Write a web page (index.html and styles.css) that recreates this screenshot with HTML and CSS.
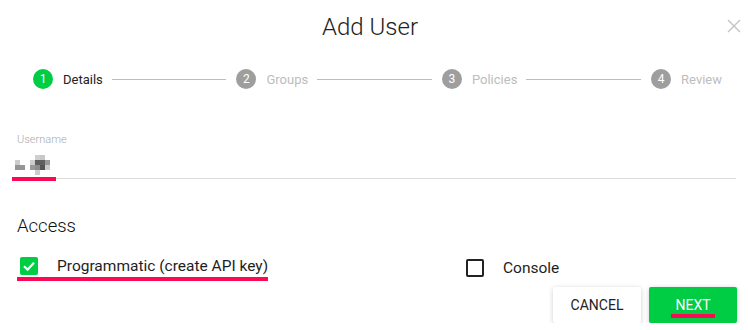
FILE: index.html
```html
<!DOCTYPE html>
<html lang="en">
<head>
    <meta charset="UTF-8">
    <meta name="viewport" content="width=device-width, initial-scale=1.0">
    <title>Add User</title>
    <link rel="stylesheet" href="styles.css">
</head>
<body>

<div class="dialog">
    <!-- Header -->
    <div class="dialog-header">
        <span></span>
        <h1>Add User</h1>
        <button class="close-btn" aria-label="Close">
            <svg width="14" height="14" viewBox="0 0 14 14">
                <path d="M1 1 L13 13 M13 1 L1 13" stroke="#c4c4c4" stroke-width="1.4" fill="none"/>
            </svg>
        </button>
    </div>

    <!-- Stepper -->
    <div class="stepper">
        <div class="step active"><span class="step-num">1</span><span class="step-label">Details</span></div>
        <div class="step-line"></div>
        <div class="step"><span class="step-num">2</span><span class="step-label">Groups</span></div>
        <div class="step-line"></div>
        <div class="step"><span class="step-num">3</span><span class="step-label">Policies</span></div>
        <div class="step-line"></div>
        <div class="step"><span class="step-num">4</span><span class="step-label">Review</span></div>
    </div>

    <!-- Username -->
    <div class="field">
        <label class="field-label">Username</label>
        <div class="field-value">
            <svg class="blurred" width="40" height="20" viewBox="15 155 40 20">
                <rect x="35" y="155" width="5" height="5" fill="#cfcfcf"/>
                <rect x="40" y="155" width="5" height="5" fill="#c8c8c8"/>
                <rect x="15" y="160" width="5" height="5" fill="#cccccc"/>
                <rect x="30" y="160" width="5" height="5" fill="#cdcdcd"/>
                <rect x="35" y="160" width="5" height="5" fill="#5e5e5e"/>
                <rect x="40" y="160" width="5" height="5" fill="#606060"/>
                <rect x="45" y="160" width="5" height="5" fill="#9a9a9a"/>
                <rect x="15" y="165" width="5" height="5" fill="#959595"/>
                <rect x="20" y="165" width="5" height="5" fill="#959595"/>
                <rect x="30" y="165" width="5" height="5" fill="#999999"/>
                <rect x="35" y="165" width="5" height="5" fill="#8c8c8c"/>
                <rect x="40" y="165" width="5" height="5" fill="#555555"/>
                <rect x="45" y="165" width="5" height="5" fill="#cccccc"/>
                <rect x="35" y="170" width="5" height="5" fill="#cccccc"/>
            </svg>
        </div>
        <span class="mark mark-field"></span>
    </div>

    <!-- Access -->
    <h2 class="section-title">Access</h2>
    <div class="options">
        <label class="option marked">
            <span class="checkbox checked">
                <svg width="18" height="18" viewBox="0 0 18 18">
                    <path d="M4 9.2 L7.6 12.6 L14 5.8" stroke="#fff" stroke-width="2.2" fill="none"/>
                </svg>
            </span>
            <span class="option-text">Programmatic (create API key)</span>
        </label>
        <label class="option">
            <span class="checkbox"></span>
            <span class="option-text">Console</span>
        </label>
    </div>

    <!-- Actions -->
    <div class="actions">
        <button class="btn btn-cancel">Cancel</button>
        <button class="btn btn-next"><span class="btn-text">Next</span></button>
    </div>
</div>

</body>
</html>
```

FILE: styles.css
```css
/* General Styles */
body {
    margin: 0;
    font-family: Roboto, "Liberation Sans", sans-serif;
    background-color: #ffffff;
    color: #222;
}

.dialog {
    width: 724px;
    padding: 0 12px;
}

/* Header */
.dialog-header {
    display: grid;
    grid-template-columns: 1fr auto 1fr;
    align-items: center;
    height: 54px;
}

.dialog-header h1 {
    margin: 0 8px 0 0;
    font-family: "Roboto Light", Roboto, sans-serif;
    font-size: 24px;
    font-weight: 300;
    color: #222;
}

.close-btn {
    justify-self: end;
    margin-right: -5px;
    padding: 0;
    border: none;
    background: none;
    display: flex;
    margin-top: -2px;
}

/* Stepper */
.stepper {
    display: flex;
    align-items: center;
    margin-top: 15px;
    padding: 0 14px 0 21px;
}

.step {
    display: flex;
    align-items: center;
    gap: 10px;
}

.step-num {
    width: 20px;
    height: 20px;
    border-radius: 50%;
    background-color: #9e9e9e;
    color: #fff;
    font-size: 12px;
    display: flex;
    align-items: center;
    justify-content: center;
}

.step-label {
    font-size: 13px;
    color: #bdbdbd;
}

.step.active .step-num {
    background-color: #00cc44;
}

.step.active .step-label {
    color: #222;
}

.step-line {
    flex: 1;
    height: 1px;
    background-color: #bdbdbd;
    margin: 0 10px 0 9px;
}

/* Username field */
.field {
    position: relative;
    margin-top: 44px;
    border-bottom: 1px solid #dedede;
}

.field-label {
    display: block;
    padding-left: 5px;
    font-size: 11px;
    line-height: 14px;
    color: #aaa;
    font-weight: 300;
}

.field-value {
    margin-top: 8px;
    height: 20px;
    padding: 0 0 3px 3px;
}

.blurred {
    display: block;
}

.mark {
    position: absolute;
    background-color: #fa0a55;
    height: 4px;
}

.mark-field {
    left: 0;
    width: 44px;
    bottom: -3px;
}

/* Access */
.section-title {
    margin: 35px 0 0 5px;
    font-size: 18.5px;
    font-weight: 300;
    line-height: 24px;
    color: #111;
}

.options {
    display: grid;
    grid-template-columns: 446px 1fr;
    margin-top: 19px;
    padding-left: 5px;
}

.option {
    display: inline-flex;
    align-items: center;
    gap: 19px;
    justify-self: start;
    padding: 0 0 2px 3px;
    font-size: 15.5px;
    color: #1e1e1e;
}

.option.marked {
    border-bottom: 4px solid #fa0a55;
}

.checkbox {
    width: 18px;
    height: 18px;
    box-sizing: border-box;
    border: 2px solid #222;
    border-radius: 2px;
    display: flex;
}

.checkbox.checked {
    border: none;
    background-color: #00cc44;
}

/* Actions */
.actions {
    display: flex;
    justify-content: flex-end;
    gap: 8px;
    margin-top: 6px;
    margin-right: -1px;
}

.btn {
    width: 88px;
    height: 36px;
    border: none;
    border-radius: 2px;
    font-family: inherit;
    font-size: 14px;
    text-transform: uppercase;
    cursor: pointer;
    box-shadow: 0 1px 5px rgba(0, 0, 0, 0.2);
}

.btn-cancel {
    background-color: #fff;
    color: #222;
}

.btn-next {
    background-color: #00cc44;
    color: #fff;
}

.btn-text {
    display: inline-block;
    padding: 0 4px 1px;
    border-bottom: 4px solid #fa0a55;
    margin-top: 5px;
}
```
